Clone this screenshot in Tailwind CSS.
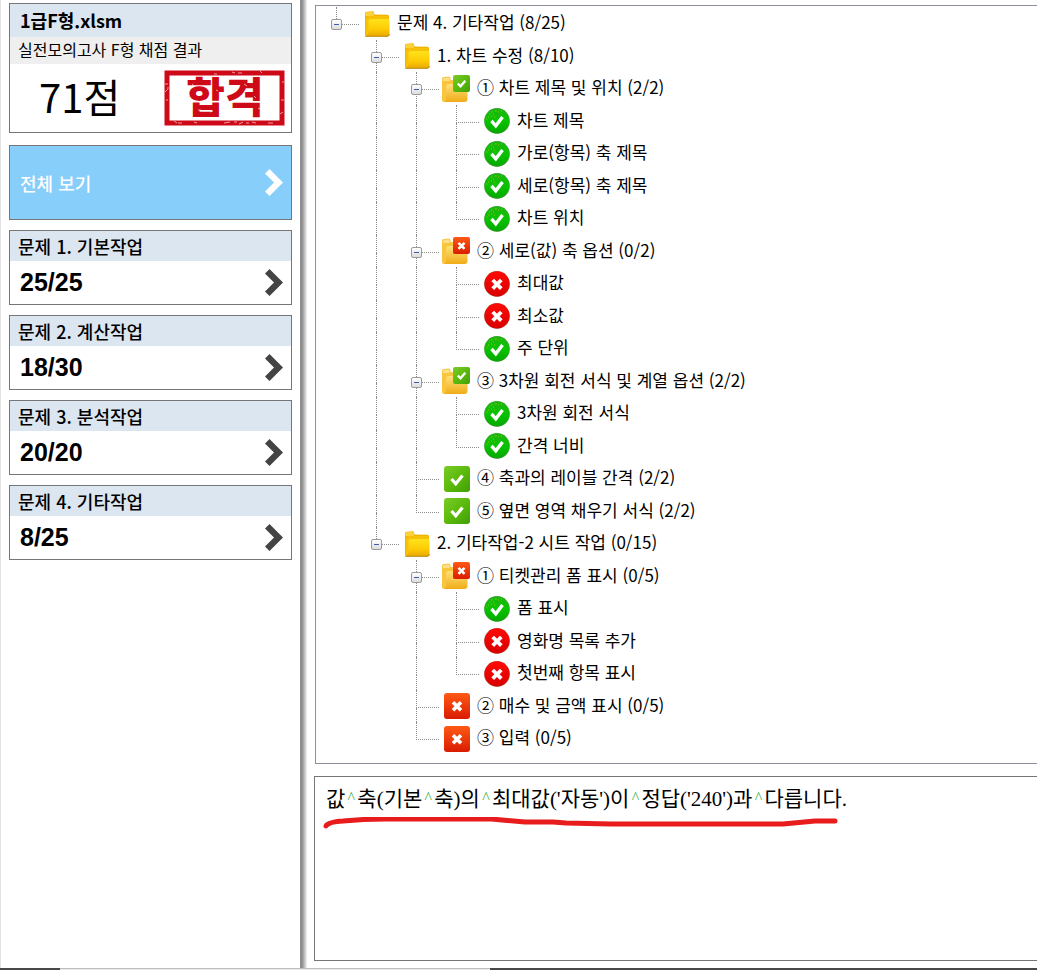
<!DOCTYPE html>
<html lang="ko">

<head>
  <meta charset="UTF-8">
  <title>실전모의고사 F형 채점 결과</title>
  <script src="https://cdn.jsdelivr.net/npm/@tailwindcss/browser@4"></script>
</head>

<body class="min-h-screen flex flex-col bg-white text-black font-['Noto_Sans_CJK_KR',sans-serif]">

  <!-- shared icons; kept rendered at zero size so the gradients resolve -->
  <svg class="absolute size-0" aria-hidden="true">
    <defs>
      <linearGradient id="gold" x1="0" y1="0" x2="0" y2="1">
        <stop offset="0" stop-color="#ffe21a" />
        <stop offset=".6" stop-color="#fdcb05" />
        <stop offset="1" stop-color="#e9a800" />
      </linearGradient>
      <linearGradient id="paleGold" x1="0" y1="0" x2="0" y2="1">
        <stop offset="0" stop-color="#ffe07a" />
        <stop offset="1" stop-color="#f0ac18" />
      </linearGradient>
      <linearGradient id="leaf" x1="0" y1="0" x2="1" y2="1">
        <stop offset="0" stop-color="#7ccb2a" />
        <stop offset=".5" stop-color="#5cba0c" />
        <stop offset="1" stop-color="#3f9f06" />
      </linearGradient>
      <linearGradient id="flame" x1="0" y1="0" x2="0" y2="1">
        <stop offset="0" stop-color="#ff5a14" />
        <stop offset="1" stop-color="#d91c02" />
      </linearGradient>
      <linearGradient id="green" x1="0" y1="0" x2="0" y2="1">
        <stop offset="0" stop-color="#1db410" />
        <stop offset=".5" stop-color="#08c400" />
        <stop offset="1" stop-color="#06a800" />
      </linearGradient>
      <linearGradient id="red" x1="0" y1="0" x2="0" y2="1">
        <stop offset="0" stop-color="#ff0a05" />
        <stop offset="1" stop-color="#d80000" />
      </linearGradient>
    </defs>
    <symbol id="folder" viewBox="0 0 26 26">
      <path d="M1 2.500Q1 .8 2.700 .8L8.500 .2Q10.300 .2 10.300 2V3L23 3.500Q25 3.700 25 5.500V24Q25 25.500 23.500 25.500H2.500Q1 25.500 1 24Z" fill="#f0b400" />
      <path d="M1.500 3Q1.500 1.300 3 1.300L8.300 .8Q9.800 .8 9.800 2.300V5H1.500Z" fill="#fbd23a" />
      <path d="M10.300 0V3.500H26V0Z" fill="#fff" />
      <path d="M2 9Q2 5 6 5H24.500V24H2Z" fill="#f7c10a" />
      <path d="M4.500 10Q4.500 8 6.500 8H24Q25.500 8 25.500 10V22Q25.500 25 22.500 25H1.500Q4.500 24 4.500 21Z" fill="url(#gold)" />
      <path d="M1.500 25.300H23.500Q25.300 25.200 25.500 23" fill="none" stroke="#b98a1c" stroke-width="1" />
    </symbol>
    <symbol id="folder-back" viewBox="0 0 28 28">
      <path d="M0 4Q0 2 2 2L6.500 1.500Q8.500 1.500 8.500 3.500V5L20 6V26Q20 27 19 27H2Q0 27 0 25Z" fill="#f8c63c" />
      <path d="M1 4.500Q1 3 2.500 3L6.500 2.500Q7.500 2.500 7.500 4V6H1Z" fill="#ffe08a" />
      <path d="M4 12Q4 9 7 9H25.500V24Q25.500 27 22.500 27H2Q4 26 4 23Z" fill="url(#paleGold)" />
    </symbol>
    <symbol id="folder-ok" viewBox="0 0 28 28">
      <use href="#folder-back" width="28" height="28" />
      <rect x="11" y="0" width="17" height="17" rx="2" fill="url(#leaf)" />
      <path d="M15.800 8.500L18.500 11.300L23.300 5.800" fill="none" stroke="#fff" stroke-width="2.400" />
    </symbol>
    <symbol id="folder-no" viewBox="0 0 28 28">
      <use href="#folder-back" width="28" height="28" />
      <rect x="11" y="0" width="17" height="17" rx="2" fill="url(#flame)" />
      <path d="M16.500 5.800L22.500 11.800M22.500 5.800L16.500 11.800" stroke="#fff" stroke-width="2.600" />
    </symbol>
    <symbol id="box-ok" viewBox="0 0 26 26">
      <rect width="26" height="26" rx="3" fill="url(#leaf)" />
      <path d="M7.500 13L11.800 17.800L18.500 9.500" fill="none" stroke="#fff" stroke-width="3.200" />
    </symbol>
    <symbol id="box-no" viewBox="0 0 26 26">
      <rect width="26" height="26" rx="3" fill="url(#flame)" />
      <path d="M9 9.300L17 17.300M17 9.300L9 17.300" stroke="#fff" stroke-width="3.600" />
    </symbol>
    <symbol id="dot-ok" viewBox="0 0 26 26">
      <circle cx="13" cy="13" r="12.900" fill="#7d9a70" />
      <circle cx="13" cy="12.800" r="12.500" fill="url(#green)" />
      <path d="M5 6h1M7 4h1.500M9 6h1M11 3h1.500M4 9h1M7 8h1M14 4h1M10 9h1M2.500 11h1M17 3h1" stroke="#8fc800" stroke-width="1" />
      <path d="M7.500 12.800L11.800 17.800L18.500 9" fill="none" stroke="#fff" stroke-width="3.400" />
    </symbol>
    <symbol id="dot-no" viewBox="0 0 26 26">
      <circle cx="13" cy="13" r="12.900" fill="#a8705c" />
      <circle cx="13" cy="12.800" r="12.500" fill="url(#red)" />
      <path d="M8.700 9L17.300 17.600M17.300 9L8.700 17.600" stroke="#fff" stroke-width="3.800" />
    </symbol>
    <symbol id="chevron" viewBox="0 0 18 27">
      <path d="M4.500 0L18 13.500L4.500 27L0 22.500L9 13.500L0 4.500Z" fill="currentColor" />
    </symbol>
  </svg>

  <div class="flex-1 flex">
    <aside class="w-[300px] shrink-0 border-l border-[#e3e3e3] pl-2 pr-2 pt-[3px] flex flex-col">
      <section class="border border-[#767676] mb-3">
        <h1 class="h-[33px] px-[10px] bg-[#dce6f0] text-lg leading-[33px] font-bold">1급F형.xlsm</h1>
        <p class="h-[27px] px-2 bg-[#efefef] text-base leading-6">실전모의고사 F형 채점 결과</p>
        <div class="h-[68px] flex items-center justify-between pl-[29px] pr-[6px]">
          <p class="text-[40px] leading-none pb-1">71점</p>
          <svg class="w-[121px] h-[56px] overflow-visible" viewBox="0 0 121 56" role="img" aria-label="합격">
            <rect x="3" y="3" width="115" height="50" fill="none" stroke="#cf0a18" stroke-width="5" />
            <text x="61" y="43" text-anchor="middle" class="font-black text-[42px] font-['Noto_Sans_CJK_KR',sans-serif]" fill="#cf0a18">합격</text>
            <g stroke="#fff" stroke-width="1" opacity=".6">
              <path d="M1 14h3M3 18h2M1 22l3-3M2 30h2M68 2l3 1M74 3h4M50 4h3M96 1l2 2M118 12h2M117 30h3M116 44l3-2" />
              <path d="M14 53h4M30 52l3 1M60 53l6-1M70 52h3M75 54l4-2M82 53h3M88 52l4 1M104 53h5M10 51l3 2" />
              <path d="M28 14l2 2M34 40h3M46 42l3-1M52 20l2 1M70 16h3M80 14l3 2M90 26l2 2M94 38l2 1M78 30l2-1" />
            </g>
          </svg>
        </div>
      </section>

      <nav class="flex flex-col gap-[10px]">
        <button class="h-[75px] border border-[#767676] bg-[#87cefa] text-white px-[10px] pr-2 flex items-center justify-between">
          <span class="text-lg font-medium">전체 보기</span>
          <svg class="w-[18px] h-[27px]"><use href="#chevron" /></svg>
        </button>
        <button class="h-[75px] border border-[#767676] text-left flex flex-col">
          <span class="w-full h-[30px] px-2 bg-[#dce6f0] text-lg leading-[30px] font-medium">문제 1. 기본작업</span>
          <span class="w-full flex-1 pl-[10px] pr-2 flex items-center justify-between">
            <b class="text-[25px] leading-none font-['Liberation_Sans',sans-serif]">25/25</b>
            <svg class="w-[18px] h-[27px] text-[#444]"><use href="#chevron" /></svg>
          </span>
        </button>
        <button class="h-[75px] border border-[#767676] text-left flex flex-col">
          <span class="w-full h-[30px] px-2 bg-[#dce6f0] text-lg leading-[30px] font-medium">문제 2. 계산작업</span>
          <span class="w-full flex-1 pl-[10px] pr-2 flex items-center justify-between">
            <b class="text-[25px] leading-none font-['Liberation_Sans',sans-serif]">18/30</b>
            <svg class="w-[18px] h-[27px] text-[#444]"><use href="#chevron" /></svg>
          </span>
        </button>
        <button class="h-[75px] border border-[#767676] text-left flex flex-col">
          <span class="w-full h-[30px] px-2 bg-[#dce6f0] text-lg leading-[30px] font-medium">문제 3. 분석작업</span>
          <span class="w-full flex-1 pl-[10px] pr-2 flex items-center justify-between">
            <b class="text-[25px] leading-none font-['Liberation_Sans',sans-serif]">20/20</b>
            <svg class="w-[18px] h-[27px] text-[#444]"><use href="#chevron" /></svg>
          </span>
        </button>
        <button class="h-[75px] border border-[#767676] text-left flex flex-col">
          <span class="w-full h-[30px] px-2 bg-[#dce6f0] text-lg leading-[30px] font-medium">문제 4. 기타작업</span>
          <span class="w-full flex-1 pl-[10px] pr-2 flex items-center justify-between">
            <b class="text-[25px] leading-none font-['Liberation_Sans',sans-serif]">8/25</b>
            <svg class="w-[18px] h-[27px] text-[#444]"><use href="#chevron" /></svg>
          </span>
        </button>
      </nav>
    </aside>

    <div class="w-[7px] shrink-0 bg-linear-to-r from-[#8f8f8f] from-30% to-[#f4f4f4]"></div>

    <main class="flex-1 min-w-0 pl-[7px] pt-[5px] pb-[7px] flex flex-col gap-3">
      <div id="tree" role="tree" class="ml-px border border-r-0 border-[#8b909a] pt-px pb-2"></div>

      <section class="flex-1 border border-r-0 border-[#767676] pl-2 pt-1">
        <p class="pl-[3px] text-[21px] leading-9 whitespace-nowrap font-['Liberation_Serif','Noto_Sans_CJK_KR',serif]" id="message"></p>
        <svg class="w-[516px] h-[12px]" viewBox="0 0 516 12" aria-hidden="true">
          <path d="M3 9Q5 5 20 4Q40 2 62 2H168L202 5H230L243 6L288 7H460L492 4H512" fill="none" stroke="#e81c1c" stroke-width="5" stroke-linecap="round" stroke-linejoin="round" />
        </svg>
      </section>
    </main>
  </div>

  <footer class="h-[2px] flex">
    <div class="w-[60px] bg-[#484848]"></div>
    <div class="w-[430px] border-t border-[#bdbdbd] bg-[#ececec]"></div>
    <div class="flex-1 bg-[#484848]"></div>
  </footer>

  <script>
    // guides, one letter per column: "." blank, "v" line, "t" branch, "l" last branch; upper case has an expander
    const rows = [
      ["L", "folder", "문제 4. 기타작업 (8/25)"],
      [".T", "folder", "1. 차트 수정 (8/10)"],
      [".vT", "folder-ok", "① 차트 제목 및 위치 (2/2)"],
      [".vvt", "dot-ok", "차트 제목"],
      [".vvt", "dot-ok", "가로(항목) 축 제목"],
      [".vvt", "dot-ok", "세로(항목) 축 제목"],
      [".vvl", "dot-ok", "차트 위치"],
      [".vT", "folder-no", "② 세로(값) 축 옵션 (0/2)"],
      [".vvt", "dot-no", "최대값"],
      [".vvt", "dot-no", "최소값"],
      [".vvl", "dot-ok", "주 단위"],
      [".vT", "folder-ok", "③ 3차원 회전 서식 및 계열 옵션 (2/2)"],
      [".vvt", "dot-ok", "3차원 회전 서식"],
      [".vvl", "dot-ok", "간격 너비"],
      [".vt", "box-ok", "④ 축과의 레이블 간격 (2/2)"],
      [".vl", "box-ok", "⑤ 옆면 영역 채우기 서식 (2/2)"],
      [".L", "folder", "2. 기타작업-2 시트 작업 (0/15)"],
      ["..T", "folder-no", "① 티켓관리 폼 표시 (0/5)"],
      ["..vt", "dot-ok", "폼 표시"],
      ["..vt", "dot-no", "영화명 목록 추가"],
      ["..vl", "dot-no", "첫번째 항목 표시"],
      ["..t", "box-no", "② 매수 및 금액 표시 (0/5)"],
      ["..l", "box-no", "③ 입력 (0/5)"],
    ];

    const expander = `<button aria-label="접기" class="absolute left-[15px] top-3 size-[11px] rounded-[2px] border border-[#9a9a9a] bg-linear-to-b from-white to-[#dcdcdc] flex items-center justify-center"><span class="w-[5px] h-px bg-[#3c5ca8]"></span></button>`;

    function guide(c) {
      const kind = c.toLowerCase();
      if (kind === ".") return `<span class="w-10"></span>`;
      const top = kind === "v"
        ? `<span class="h-[18px] border-l border-dotted border-[#8c8c8c]"></span>`
        : `<span class="h-[18px] border-l border-b border-dotted border-[#8c8c8c]"></span>`;
      const bottom = kind === "l" ? "" : `<span class="flex-1 border-l border-dotted border-[#8c8c8c]"></span>`;
      return `<span class="relative w-10 pl-5 flex"><span class="w-[23px] -mr-[3px] shrink-0 flex flex-col">${top}${bottom}</span>${c !== kind ? expander : ""}</span>`;
    }

    document.getElementById("tree").innerHTML = rows.map(([guides, icon, label]) => {
      // plain folders sit a little right of the badge icons
      const size = icon === "folder" ? "size-[26px] ml-0.5" : icon.startsWith("folder-") ? "size-7" : "size-[26px] ml-px";
      return `<div role="treeitem" aria-level="${guides.length}" class="odd:h-[33px] even:h-8 flex">
        ${[...guides].map(guide).join("")}
        <span class="w-10 flex items-center justify-center"><svg class="${size}"><use href="#${icon}" /></svg></span>
        <span class="pl-px text-[17px] leading-[30px] whitespace-nowrap">${label}</span>
      </div>`;
    }).join("");

    // spaces in the answer text are shown as small green carets
    const message = "값 축(기본 축)의 최대값('자동')이 정답('240')과 다릅니다.";
    document.getElementById("message").innerHTML = message.split(" ").join(`<span class="inline-block w-3 text-center text-[#3fae49] text-base leading-none align-[3px]">^</span>`);
  </script>
</body>

</html>
